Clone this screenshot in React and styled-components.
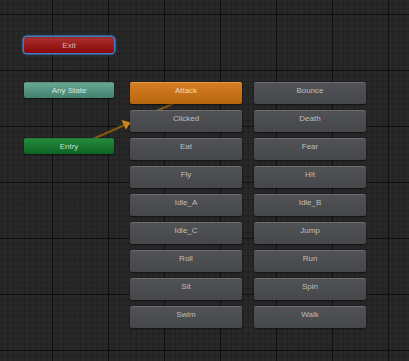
import React from "react";
import styled, { createGlobalStyle, css } from "styled-components";

const Global = createGlobalStyle`
  html, body { margin: 0; padding: 0; background: #282828; }
  body { font-family: "Liberation Sans", Arial, sans-serif; }
`;

const Canvas = styled.div`
  position: relative;
  width: 409px;
  height: 361px;
  overflow: hidden;
  background-color: #282828;
  background-image:
    linear-gradient(to right, rgba(0,0,0,0.55) 1px, transparent 1px),
    linear-gradient(to bottom, rgba(0,0,0,0.55) 1px, transparent 1px),
    linear-gradient(to right, rgba(0,0,0,0.16) 1px, transparent 1px),
    linear-gradient(to bottom, rgba(0,0,0,0.16) 1px, transparent 1px);
  background-size: 56px 56px, 56px 56px, 5.6px 5.6px, 5.6px 5.6px;
  background-position: 52px 0, 0 14px, 1.6px 0, 0 2.8px;
`;

const Wires = styled.svg`
  position: absolute;
  inset: 0;
`;

const SpecialColumn = styled.div`
  position: absolute;
  left: 24px;
  top: 37px;
  width: 90px;
  display: flex;
  flex-direction: column;
`;

const variants = {
  exit: css`
    background: linear-gradient(#a83030, #8c0606);
    box-shadow: 0 0 0 1.5px #3c7fc6, 0 0 3px 1px rgba(60,127,198,0.6);
    border-radius: 3px;
    color: #e2b0b0;
  `,
  any: css`
    background: linear-gradient(#66a895, #44806f);
    color: #d3e4de;
  `,
  entry: css`
    background: linear-gradient(#238a3a, #0d6324);
    color: #c6e0cb;
  `,
};

const SpecialNode = styled.div`
  height: 16px;
  margin-top: ${(p) => p.$gap}px;
  display: flex;
  align-items: center;
  justify-content: center;
  font-size: 8px;
  border-radius: 2px;
  border-top: 1px solid rgba(255,255,255,0.12);
  box-sizing: border-box;
  box-shadow: 0 1px 2px rgba(0,0,0,0.5);
  ${(p) => variants[p.$kind]}
`;

const StateGrid = styled.div`
  position: absolute;
  left: 130px;
  top: 82px;
  display: grid;
  grid-template-columns: 112px 112px;
  grid-auto-rows: 22px;
  column-gap: 12px;
  row-gap: 6px;
`;

const StateNode = styled.div`
  box-sizing: border-box;
  border-radius: 2px;
  border-top: 1px solid ${(p) => (p.$default ? "#e89a48" : "#6a6c6f")};
  background: ${(p) =>
    p.$default
      ? "linear-gradient(#d47e22, #b8650f)"
      : "linear-gradient(#505255, #45474a)"};
  color: ${(p) => (p.$default ? "#f0d8bc" : "#bfbfbf")};
  box-shadow: 0 1px 2px rgba(0,0,0,0.55);
  font-size: 8px;
  line-height: 16px;
  text-align: center;
`;

const left = ["Attack", "Clicked", "Eat", "Fly", "Idle_A", "Idle_C", "Roll", "Sit", "Swim"];
const right = ["Bounce", "Death", "Fear", "Hit", "Idle_B", "Jump", "Run", "Spin", "Walk"];

export default function App() {
  const cells = [];
  left.forEach((n, i) => {
    cells.push(n, right[i]);
  });
  return (
    <>
      <Global />
      <Canvas>
        <Wires width="409" height="361" viewBox="0 0 409 361">
          <line x1="69" y1="149.5" x2="186" y2="98" stroke="#845810" strokeWidth="2" />
          <polygon points="131,122.5 121.5,120 125.8,129.5" fill="#c8861c" />
        </Wires>
        <SpecialColumn>
          <SpecialNode $kind="exit" $gap={0}>Exit</SpecialNode>
          <SpecialNode $kind="any" $gap={29}>Any State</SpecialNode>
          <SpecialNode $kind="entry" $gap={40}>Entry</SpecialNode>
        </SpecialColumn>
        <StateGrid>
          {cells.map((n) => (
            <StateNode key={n} $default={n === "Attack"}>
              {n}
            </StateNode>
          ))}
        </StateGrid>
      </Canvas>
    </>
  );
}
